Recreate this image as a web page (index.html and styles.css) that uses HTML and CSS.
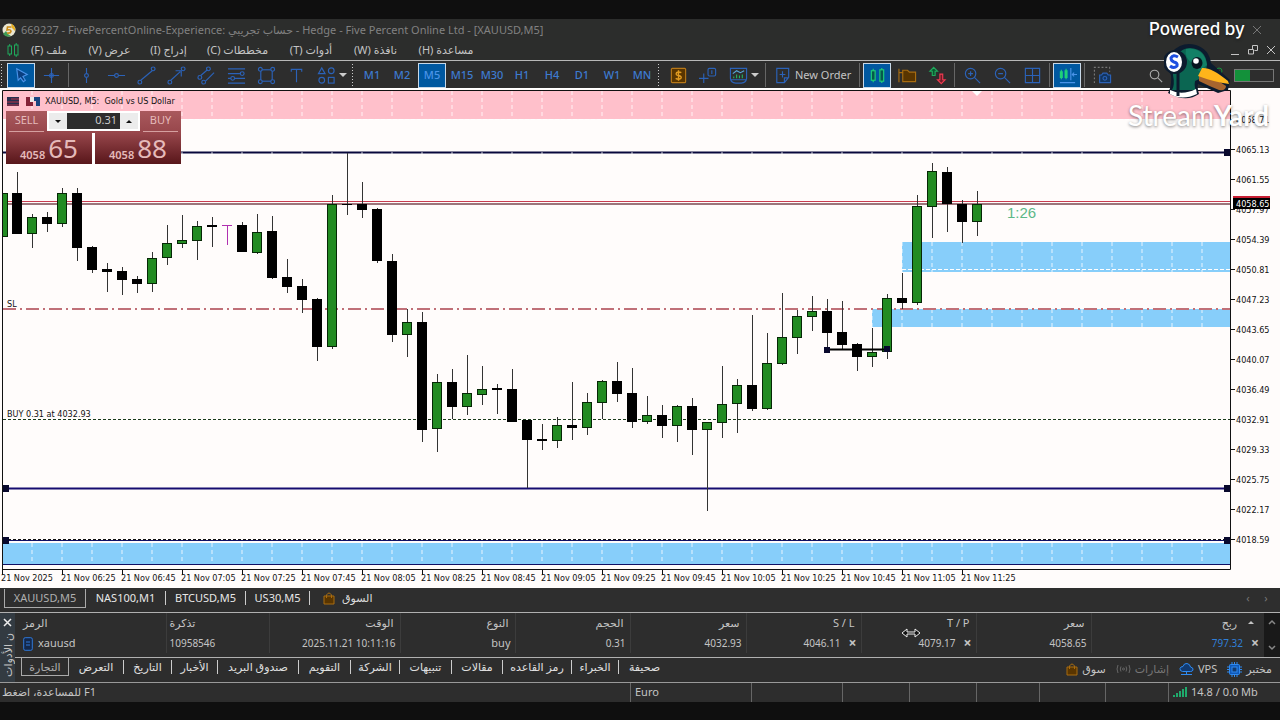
FILE: index.html
```html
<!DOCTYPE html>
<html lang="ar">
<head>
<meta charset="utf-8">
<title>XAUUSD,M5</title>
<link rel="stylesheet" href="styles.css">
</head>
<body>
<div class="app">
  <header class="titlebar">
    <svg class="logo" width="14" height="16" viewBox="0 0 14 16"><circle cx="7" cy="8" r="6.5" fill="#e9e6d2"/><path d="M1 12Q4 16 9 14Q5 12 4 9Z" fill="#3f9a55"/><path d="M9 1.500Q14 4 13 9L10 6Z" fill="#e8b020"/><path d="M9.500 5H5.500L5 8Q9 7 9 9.500Q8.500 11.500 5 11" fill="none" stroke="#c98a16" stroke-width="1.600"/></svg>
    <span class="title">669227 - FivePercentOnline-Experience: حساب تجريبي - Hedge - Five Percent Online Ltd - [XAUUSD,M5]</span>
    <button class="win-close" aria-label="Close"><svg width="10" height="10" viewBox="0 0 10 10"><path d="M1 1L9 9M9 1L1 9" stroke="#777" fill="none"/></svg></button>
  </header>

  <nav class="menubar">
    <svg class="menu-icon" width="12" height="14" viewBox="0 0 12 14" fill="none" stroke="#1faa5c"><rect x="1" y="3" width="3.500" height="8"/><path d="M2.700 1V3M2.700 11V13M9.200 0V2M9.200 12V14"/><rect x="7.500" y="2" width="3.500" height="10"/></svg>
    <button class="menu m1" dir="rtl">ملف (F)</button>
    <button class="menu m2" dir="rtl">عرض (V)</button>
    <button class="menu m3" dir="rtl">إدراج (I)</button>
    <button class="menu m4" dir="rtl">مخططات (C)</button>
    <button class="menu m5" dir="rtl">أدوات (T)</button>
    <button class="menu m6" dir="rtl">نافذة (W)</button>
    <button class="menu m7" dir="rtl">مساعدة (H)</button>
    <svg class="mdi" width="46" height="12" viewBox="0 0 46 12" fill="none" stroke="#c4c4c4"><path d="M1 10.500H9M37 2L45 10M45 2L37 10"/><path d="M22.500 5V1.500H27.500V6.500H24.500M18.500 5.500H23.500V10H18.500Z"/></svg>
  </nav>

  <div class="toolbar">
    <span class="grip"></span>
    <button class="tool on" aria-label="Cursor"><svg viewBox="0 0 20 20"><path d="M5 3L16 9L11.500 11L14 15L12 16.500L9 12.500L6.500 15Z" fill="#0a3f80" stroke="#4a93e8"/></svg></button>
    <button class="tool" aria-label="Crosshair"><svg viewBox="0 0 20 20"><path d="M10 2V18M2 10H18"/><circle cx="10" cy="10" r="2"/></svg></button>
    <span class="sep"></span>
    <button class="tool" aria-label="Vertical line"><svg viewBox="0 0 20 20"><path d="M10 2V8M10 12V18"/><circle cx="10" cy="10" r="2"/></svg></button>
    <button class="tool" aria-label="Horizontal line"><svg viewBox="0 0 20 20"><path d="M1 10H8M12 10H19"/><circle cx="10" cy="10" r="2"/></svg></button>
    <button class="tool" aria-label="Trend line"><svg viewBox="0 0 20 20"><path d="M4 15L16 5"/><circle cx="3" cy="17" r="2"/><circle cx="17" cy="3" r="2"/></svg></button>
    <button class="tool" aria-label="Arrow line"><svg viewBox="0 0 20 20"><path d="M4 15L14 6M9 5H15V11"/><circle cx="3" cy="17" r="2"/><circle cx="17" cy="3" r="2"/></svg></button>
    <button class="tool" aria-label="Channel"><svg viewBox="0 0 20 20"><path d="M4 10L11 4M9 16L18 7"/><circle cx="3" cy="12" r="2"/><circle cx="12" cy="3" r="2"/><circle cx="7" cy="17" r="2"/></svg></button>
    <button class="tool" aria-label="Fibonacci"><svg viewBox="0 0 20 20"><path d="M1 3H19M1 8H14M1 13H4M8 13H19M1 18H19"/><circle cx="16" cy="8" r="2"/><circle cx="6" cy="13" r="2"/></svg></button>
    <button class="tool" aria-label="Rectangle"><svg viewBox="0 0 20 20"><rect x="4" y="4" width="12" height="12"/><g fill="#2d2d2d"><circle cx="3.500" cy="3.500" r="2"/><circle cx="16.500" cy="3.500" r="2"/><circle cx="3.500" cy="16.500" r="2"/><circle cx="16.500" cy="16.500" r="2"/></g></svg></button>
    <button class="tool" aria-label="Text"><svg viewBox="0 0 20 20"><path d="M4.500 6V3.500H15.500V6M10 3.500V17"/></svg></button>
    <button class="tool" aria-label="Shapes"><svg viewBox="0 0 20 20"><path d="M5 2L8.500 8H1.500Z"/><circle cx="15" cy="5" r="3"/><circle cx="5" cy="15" r="3"/><rect x="12" y="12" width="6" height="6"/></svg></button>
    <span class="caret"></span>
    <span class="grip g2"></span>
    <button class="tool tf">M1</button><button class="tool tf">M2</button><button class="tool tf on">M5</button><button class="tool tf">M15</button><button class="tool tf">M30</button><button class="tool tf">H1</button><button class="tool tf">H4</button><button class="tool tf">D1</button><button class="tool tf">W1</button><button class="tool tf">MN</button>
    <span class="grip"></span>
    <button class="tool" aria-label="Trading"><svg viewBox="0 0 20 20"><rect x="2.500" y="2.500" width="15" height="15" rx="1" fill="#593500" stroke="#b87818"/><path d="M13 7Q10 5.500 8 7Q6.500 9.500 10 10Q14 11 12.500 13Q10 15 7 13M10 4.500V15.500" stroke="#e09a20" stroke-width="1.500"/></svg></button>
    <button class="tool" aria-label="Data window"><svg viewBox="0 0 20 20"><path d="M5 8V18M0 13H10"/><rect x="9.500" y="2.500" width="8" height="8" rx="1.500"/><path d="M13.500 4.500V8.500"/></svg></button>
    <button class="tool" aria-label="Indicators"><svg viewBox="0 0 20 20"><path d="M1.500 2.500H18.500V13Q18 17.500 13 18H7Q2 17.500 1.500 13ZM2 14.500H18"/><path d="M4 8L8 5L12 7L16 5" stroke="#58a6d8"/><path d="M5 11V13M8 9V13M11 10V13M14 9V13" stroke="#24b060"/></svg></button>
    <span class="caret"></span>
    <span class="sep s2"></span>
    <button class="order"><svg viewBox="0 0 20 20"><path d="M4 2.500H16.500V12L12 17.500H4ZM12 17V12.500H16.500M10 5.500V12M7 9H13"/></svg>New Order</button>
    <span class="sep"></span>
    <button class="tool on" aria-label="Candles"><svg viewBox="0 0 20 20"><g stroke="#1ed078" fill="#06594d"><path d="M5.500 3V17M14.500 2V18"/><rect x="3.500" y="5" width="4" height="10"/><rect x="12.500" y="4" width="4" height="12"/></g></svg></button>
    <button class="tool" aria-label="Templates"><svg viewBox="0 0 20 20"><g stroke="#a86c10" fill="#593500"><path d="M1 3V17M1 7H5M5 4.500H10L12 6.500H18.500V16.500H5Z"/></g></svg></button>
    <button class="tool" aria-label="Buy and sell"><svg viewBox="0 0 20 20"><path d="M6 1.500L10 5.500H7.500V10H4.500V5.500H2Z" stroke="#1faa5c" fill="#0c5530"/><path d="M14 18.500L18 14.500H15.500V8.500H12.500V14.500H10Z" stroke="#f03a50" fill="#701c28"/></svg></button>
    <span class="sep"></span>
    <button class="tool" aria-label="Zoom in"><svg viewBox="0 0 20 20"><circle cx="8" cy="8" r="5.500"/><path d="M12 12L18 18M8 5.500V10.500M5.500 8H10.500"/></svg></button>
    <button class="tool" aria-label="Zoom out"><svg viewBox="0 0 20 20"><circle cx="8" cy="8" r="5.500"/><path d="M12 12L18 18M5.500 8H10.500"/></svg></button>
    <button class="tool" aria-label="Tile"><svg viewBox="0 0 20 20"><path d="M2.500 2.500H17.500V17.500H2.500ZM10 2.500V17.500M2.500 10H17.500"/></svg></button>
    <span class="sep"></span>
    <button class="tool on" aria-label="Chart shift"><svg viewBox="0 0 20 20"><path d="M2 17.500H18M13.500 2V15" stroke="#4a93e8"/><path d="M15 9H20M17 7L15 9L17 11" stroke="#4a93e8"/><path d="M3.500 4V14M8.500 3V14M2.500 6H4.500V12H2.500ZM7.500 5H9.500V12H7.500Z" stroke="#1ed078"/></svg></button>
    <span class="sep"></span>
    <button class="tool" aria-label="Screenshot"><svg viewBox="0 0 20 20"><path d="M1.500 18V1.500H17.500V6" stroke-dasharray="2 2" stroke="#777"/><path d="M7 9.500H9L10.500 7.500H14.500L16 9.500H18.500V17.500H7Z" fill="#123560"/><circle cx="12.500" cy="13" r="2"/></svg></button>
    <span class="grow"></span>
    <button class="tool find" aria-label="Search"><svg viewBox="0 0 20 20"><circle cx="9" cy="9" r="4.500" stroke="#aaa"/><path d="M12.500 12.500L17 17" stroke="#aaa"/></svg></button>
    <svg class="bulb" width="8" height="12" viewBox="0 0 8 12" fill="none" stroke="#13913a"><circle cx="4" cy="4" r="3"/><path d="M4 3V10"/></svg>
    <span class="level" role="img" aria-label="Level"><i></i></span>
  </div>

  <main class="chart">
    <svg class="plot" viewBox="0 89 1280 499" role="img" aria-label="XAUUSD M5">
      <rect x="3" y="91" width="1227" height="28" fill="#ffc0cb"/>
      <rect x="902" y="242" width="328" height="30" fill="#87cefa"/>
      <rect x="872" y="309" width="358" height="18" fill="#87cefa"/>
      <rect x="3" y="543" width="1227" height="21" fill="#87cefa"/>
      <path d="M3 152.500H1230" stroke="#08083c" stroke-width="2"/>
      <g id="grid" stroke="#fff" stroke-opacity="0.800" stroke-dasharray="4 3" fill="none"></g>
      <path d="M3 119.500H1230M902 269.500H1230" stroke="#fff" stroke-dasharray="4 2"/>
      <path d="M3 488.500H1230" stroke="#160c70" stroke-width="2"/>
      <path d="M3 540.500H1230M3 564.500H1230" stroke="#101064"/>
      <path d="M3 539.500H1230" stroke="#111" stroke-dasharray="3 2"/>
      <path d="M3 201.500H1230" stroke="#c83c50" shape-rendering="crispEdges"/>
      <path d="M3 204H1230" stroke="#7d4850" stroke-width="1.500"/>
      <path d="M3 309H1230" stroke="#c07078" stroke-dasharray="13 4 2 4" stroke-width="2"/>
      <path d="M3 419.500H1230" stroke="#1a3a1a" stroke-dasharray="3 2"/>
      <g id="candles" shape-rendering="crispEdges"></g>
      <path d="M827 349.500H887" stroke="#000" stroke-width="2"/>
      <path d="M824 347h6v6h-6zM884 346h6v6h-6zM1224 149h6v7h-6zM3 485h6v7h-6zM1224 485h6v7h-6zM3 537h6v7h-6zM1224 537h6v7h-6z" fill="#08082c"/>
      <path d="M972 91H982L977 96Z" fill="#fff"/>
      <path d="M2.500 570V90.500H1230.500V569.500H2.500" fill="none" stroke="#111"/>
      <g id="ticks" stroke="#111"></g>
      <g id="labels" class="axis"></g>
      <rect x="1233" y="196" width="37" height="8" fill="#c81e32"/>
      <rect x="1233" y="198" width="37" height="11" fill="#000"/>
      <text class="axis inv" x="1236" y="207">4058.65</text>
      <text class="axis" x="7" y="307">SL</text>
      <text class="axis" x="7" y="417">BUY 0.31 at 4032.93</text>
      <text class="timer" x="1007" y="218">1:26</text>
    </svg>

    <section class="trade">
      <h1><svg width="12" height="9" viewBox="0 0 12 9"><path d="M0 0H12V9H0Z" fill="#26304f"/><path d="M4 2H12M0 5H12M0 8H12" stroke="#b83248"/></svg><svg width="14" height="9" viewBox="0 0 14 9"><path d="M0 0H4V5H7V9H0Z" fill="#832238"/><path d="M8 0H14V9H10V4H8Z" fill="#1c4580"/><path d="M4 0H8V5H4Z" fill="#efe9e9"/></svg><span>XAUUSD, M5:&nbsp; Gold vs US Dollar</span></h1>
      <div class="deal">
        <button class="side">SELL</button>
        <div class="spin"><button aria-label="Less"><i class="dn"></i></button><input value="0.31" aria-label="Volume"><button aria-label="More"><i class="up"></i></button></div>
        <button class="side">BUY</button>
      </div>
      <div class="quotes"><button><b>4058</b><span>65</span></button><button><b>4058</b><span>88</span></button></div>
    </section>
  </main>

  <nav class="charts">
    <button class="ctab on">XAUUSD,M5</button><button class="ctab c80">NAS100,M1</button><button class="ctab c80">BTCUSD,M5</button><button class="ctab c64">US30,M5</button>
    <button class="market"><svg width="12" height="13" viewBox="0 0 12 13"><path d="M1 4H11V12H1Z" fill="#593500" stroke="#a86c10"/><path d="M3.500 6V3Q6-1 8.500 3V6" fill="none" stroke="#a86c10"/></svg>السوق</button>
    <span class="grow"></span>
    <span class="pager">‹</span><span class="pager">›</span>
  </nav>

  <section class="toolbox">
    <aside><button aria-label="Close toolbox"><svg width="9" height="9" viewBox="0 0 9 9"><path d="M1 1L8 8M8 1L1 8" stroke="#eee" stroke-width="1.500"/></svg></button><span dir="rtl">ن الأدوات</span></aside>
    <div class="panel">
      <div class="list">
      <table>
        <colgroup><col class="w145"><col class="w103"><col class="w131"><col class="w115"><col class="w115"><col class="w116"><col class="w115"><col class="w115"><col class="w115"><col></colgroup>
        <thead><tr><th class="l">الرمز</th><th class="l">تذكرة</th><th>الوقت</th><th>النوع</th><th>الحجم</th><th>سعر</th><th>S / L</th><th>T / P</th><th>سعر</th><th class="last">ربح <i class="up"></i></th></tr></thead>
        <tbody><tr><td class="l"><svg width="10" height="14" viewBox="0 0 10 14"><rect x="0.700" y="0.700" width="8.600" height="12.600" rx="1.500" fill="#14284a" stroke="#2f78d8"/><path d="M3 5H7M3 8H7" stroke="#2f78d8"/></svg><span class="sym">xauusd</span></td><td class="l">10958546</td><td>2025.11.21 10:11:16</td><td class="word">buy</td><td>0.31</td><td>4032.93</td><td>4046.11<button>×</button></td><td>4079.17<button>×</button></td><td>4058.65</td><td class="last"><span class="profit">797.32</span><button>×</button></td></tr></tbody>
      </table>
      <div class="scroll"><svg width="8" height="6" viewBox="0 0 8 6"><path d="M1 5L4 2L7 5" fill="none" stroke="#888" stroke-width="1.500"/></svg><svg width="8" height="6" viewBox="0 0 8 6"><path d="M1 1L4 4L7 1" fill="none" stroke="#888" stroke-width="1.500"/></svg></div>
      </div>
      <nav class="tabs">
        <button class="btab on">التجارة</button><button class="btab b55">التعرض</button><button class="btab b48">التاريخ</button><button class="btab b46">الأخبار</button><button class="btab b81">صندوق البريد</button><button class="btab b52">التقويم</button><button class="btab b49">الشركة</button><button class="btab b52">تنبيهات</button><button class="btab b51">مقالات</button><button class="btab b69">رمز القاعده</button><button class="btab b47">الخبراء</button><button class="btab b51">صحيفة</button>
        <span class="grow"></span>
        <button class="svc"><svg width="12" height="13" viewBox="0 0 12 13"><path d="M1 4H11V12H1Z" fill="#593500" stroke="#a86c10"/><path d="M3.500 6V3Q6-1 8.500 3V6" fill="none" stroke="#a86c10"/></svg>سوق</button>
        <button class="svc dim"><svg width="15" height="10" viewBox="0 0 15 10" fill="none" stroke="#666"><circle cx="7.500" cy="5" r="1"/><path d="M5 2.500Q3.500 5 5 7.500M10 2.500Q11.500 5 10 7.500M2 1Q0 5 2 9M13 1Q15 5 13 9"/></svg>إشارات</button>
        <button class="svc"><svg width="15" height="14" viewBox="0 0 15 14" fill="#123a70" stroke="#2f8af0"><path d="M3.500 9.500Q0.500 9 1 6.500Q1.500 4.500 4 4.500Q5 1 8 1.500Q11 2 11.500 5Q14.500 5.500 14 8Q13.500 9.500 11.500 9.500Z"/><path d="M7.500 10V12.500M2 12.500H13"/></svg>VPS</button>
        <button class="svc"><svg width="15" height="15" viewBox="0 0 15 15" fill="#0f58b8" stroke="#2f8af0"><path d="M5 0V15M7.500 0V15M10 0V15M0 5H15M0 7.500H15M0 10H15"/><rect x="2.500" y="2.500" width="10" height="10" rx="1"/><rect x="5" y="5" width="5" height="5" fill="#123a70"/></svg>مختبر</button>
      </nav>
    </div>
  </section>

  <footer class="status">
    <span class="hint">للمساعدة، اضغط F1</span><span class="w121">Euro</span><span class="w91"></span><span class="w67"></span><span class="w67"></span><span class="w63"></span><span class="w66"></span><span class="w63"></span>
    <span class="net"><svg width="14" height="10" viewBox="0 0 14 10"><path d="M1 10V8M4 10V6M7 10V4M10 10V2M13 10V0" stroke="#1faa6c" stroke-width="2"/></svg>14.8 / 0.0 Mb</span>
  </footer>

  <svg class="pointer" width="20" height="10" viewBox="0 0 20 10"><path d="M1 5L6 1V4H14V1L19 5L14 9V6H6V9Z" fill="#111" stroke="#eee"/></svg>

  <div class="mark">
    <p class="by">Powered by</p>
    <svg width="66" height="58" viewBox="0 0 66 58">
      <path d="M4 50Q8 43 7 32Q-1 20 8 9Q18-2 32 2Q45 6 47 20L66 37L64 47L54 50L34 41Q33 45 35 51Q22 60 4 50Z" fill="#0c1b2e"/>
      <path d="M9 32Q10 5 26 5Q42 6 43 22Q42 34 31 38Q30 44 32 47L8 47Q11 42 9 32Z" fill="#0b6652"/>
      <path d="M22 6Q40 4 43 22L35 28L28 20Q20 14 22 6Z" fill="#128066"/>
      <path d="M6 47Q18 53 32 46L33 51Q18 58 6 51Z" fill="#fff"/>
      <path d="M35 33Q48 33 62 43Q62 48 55 47Q45 43 35 38Z" fill="#a8652e"/>
      <path d="M38 25Q47 24 64 38L65 41Q50 39 34 33Z" fill="#ffb51b"/>
      <ellipse cx="33" cy="20" rx="5.500" ry="6" fill="#07141f"/><circle cx="32" cy="18" r="2.800" fill="#fff"/>
      <path d="M14 28V53" stroke="#0c1b2e" stroke-width="3"/>
      <circle cx="11" cy="19" r="12" fill="#0c1b2e"/><ellipse cx="10" cy="19" rx="8" ry="10" fill="#fff"/>
      <path d="M14 14Q9 11 7 15Q7 18 10 19Q14 20 13 23Q10 26 6 23" fill="none" stroke="#1d4fe0" stroke-width="3"/>
    </svg>
    <p class="brand">Stream<b>Yard</b></p>
  </div>
</div>
<script src="chart.js"></script>
</body>
</html>
```
FILE: styles.css
```css
* { box-sizing: border-box; }
body { margin: 0; background: #0f0f0f; color: #c4c4c4; font: 11px/16px "Noto Sans", "DejaVu Sans", sans-serif; }
button { border: 0; padding: 0; margin: 0; background: none; color: inherit; font: inherit; white-space: nowrap; }
svg { flex: none; }
.app { position: relative; display: flex; flex-direction: column; min-height: 100vh; padding: 19px 0; }
.grow { flex: 1; }

.titlebar { display: flex; align-items: center; gap: 5px; height: 22px; padding: 0 18px 0 2px; background: #2c2d2c; color: #818181; }
.title { flex: 1; white-space: nowrap; overflow: hidden; }
.win-close { display: flex; }
.menubar { display: flex; align-items: center; height: 19px; padding: 0 4px 2px 7px; background: #2c2d2c; }
.menu-icon { margin-right: 1px; }
.menu { text-align: center; }
.m1 { width: 58px; } .m2 { width: 63px; } .m3 { width: 55px; } .m4 { width: 83px; } .m5 { width: 64px; } .m6 { width: 65px; } .m7 { width: 76px; }
.mdi { margin-left: auto; }

.toolbar { display: flex; align-items: center; height: 29px; padding: 1px 6px 0 0; background: #2d2d2d; border-top: 1px solid #b8b8b8; border-bottom: 1px solid #fff; color: #3d7bd0; }
.grip { width: 6px; height: 25px; background: radial-gradient(circle, #ccc 1px, transparent 1px) 0 0 / 3px 3px repeat-y; }
.g2 { margin-left: 4px; }
.tool { display: flex; align-items: center; justify-content: center; flex: none; width: 28px; height: 25px; margin: 0 1px; }
.tool svg, .order svg { width: 19px; height: 19px; fill: none; stroke: #2b62b8; stroke-width: 1.2; }
.on.tool { background: #0058a0; border: 1px solid #c8d8e8; }
.tf { font-size: 11px; font-weight: 500; }
.tf.on { color: #4a93e8; }
.sep { width: 1px; height: 24px; margin: 0 2px; background: #666; }
.s2 { margin-left: 6px; }
.caret { width: 8px; margin-left: -2px; border: solid transparent; border-width: 4px 4px 0; border-top-color: #ccc; }
.order { display: flex; align-items: center; gap: 3px; margin: 0 6px 0 5px; color: #c4c4c4; }
.find { margin-right: 46px; }
.bulb { margin: 0 11px 4px 0; }
.level { width: 40px; height: 13px; border: 1px solid #777; }
.level i { display: block; width: 40%; height: 11px; background: #13913a; }

.chart { position: relative; background: #fffcfb; }
.plot { display: block; width: 100%; height: auto; }
.axis { font: 9px "DejaVu Sans Condensed", "DejaVu Sans", sans-serif; fill: #111; }
.inv { fill: #fff; }
.timer { font: 15px "Liberation Sans", sans-serif; fill: #5cb888; }
.up, .dn { display: inline-block; border: solid transparent; border-width: 0 3px 3px; border-bottom-color: currentColor; }
.dn { border-width: 3px 3px 0; border-top-color: currentColor; }

.trade { position: absolute; left: 6px; top: 4px; width: 175px; color: #e5baba; }
.trade h1 { display: flex; align-items: center; gap: 7px; height: 16px; margin: 0; padding-left: 1px; color: #111; font: 9px "DejaVu Sans Condensed", "DejaVu Sans", sans-serif; white-space: nowrap; }
.trade h1 span { margin-left: -2px; }
.deal { display: flex; height: 22px; margin-top: 2px; background: linear-gradient(#a9595d, #97464b); }
.side { flex: 1; height: 21px; margin: 0 3px; padding-bottom: 3px; border-bottom: 1px solid #d5a0a0; }
.spin { display: flex; width: 93px; height: 20px; border: 2px solid #fff; background: #fff; color: #111; }
.spin button { display: flex; align-items: center; justify-content: center; width: 18px; background: #ececec; }
.spin input { flex: 1; min-width: 0; border: 0; padding: 0 3px 2px; background: #2d2d2d; color: #ccc; font: inherit; text-align: right; }
.quotes { display: flex; gap: 3px; height: 31px; background: #fff; }
.quotes button { flex: 1; display: flex; align-items: flex-end; justify-content: center; gap: 3px; padding-bottom: 1px; background: linear-gradient(#97464b, #58161a); }
.quotes b { font-weight: 600; line-height: 17px; }
.quotes span { font-size: 26px; line-height: 30px; }

.charts { display: flex; align-items: center; height: 24px; padding: 0 5px 4px 4px; background: #2e2e2e; }
.ctab { width: 82px; height: 19px; font-size: 11px; line-height: 17px; color: #e8e8e8; }
.ctab.on { border: 1px solid #aaa; border-top: 0; color: #b0b0b0; }
.c80 { width: 80px; border-right: 1px solid #ccc; }
.c64 { width: 64px; border-right: 1px solid #ccc; }
.ctab.c80, .ctab.c64 { height: 14px; line-height: 14px; }
.market { display: flex; align-items: center; gap: 7px; margin-left: 13px; color: #ddd; }
.pager { width: 18px; text-align: center; color: #777; }

.toolbox { display: flex; border-top: 1px solid #b0b0b0; background: #2d2d2d; }
.toolbox aside { display: flex; flex-direction: column; align-items: center; width: 15px; height: 69px; padding-top: 5px; background: #333b42; }
.toolbox aside button { display: flex; margin-bottom: 6px; }
.toolbox aside span { writing-mode: vertical-rl; transform: rotate(180deg); line-height: 14px; white-space: nowrap; }
.panel { flex: 1; min-width: 0; }
.list { display: flex; height: 44px; margin-left: 5px; }
table { flex: 1; table-layout: fixed; width: 0; height: 40px; border-collapse: collapse; }
th, td { height: 20px; padding: 0 4px; border-right: 1px solid #3c3c3c; font-size: 10px; font-weight: 400; line-height: 16px; text-align: right; white-space: nowrap; }
th { padding-right: 6px; font-size: 11px; }
td button { width: 8px; margin-left: 8px; font-size: 14px; font-weight: 700; line-height: 12px; vertical-align: -1px; }
.l { text-align: left; padding-left: 3px; }
td.l svg { vertical-align: middle; }
.sym { margin-left: 5px; font-size: 11px; }
.word { font-size: 11px; }
.last { border: 0; padding-right: 5px; }
th.last { padding-right: 10px; }
th.last i { margin-left: 8px; vertical-align: 3px; }
.profit { color: #2f7fd8; }
.w145 { width: 146px; } .w103 { width: 103px; } .w131 { width: 131px; } .w116 { width: 116px; } .w115 { width: 115px; }
.scroll { display: flex; flex-direction: column; align-items: center; justify-content: space-between; width: 16px; padding: 6px 0; background: #191919; }
.tabs { display: flex; align-items: flex-start; height: 25px; padding-right: 8px; border-top: 1px solid #b0b0b0; }
.btab { height: 14px; margin-top: 2px; line-height: 12px; border-right: 1px solid #ccc; color: #e0e0e0; }
.btab.on { width: 48px; height: 18px; margin: 0 0 0 6px; border: 1px solid #aaa; border-top: 0; color: #b0b0b0; line-height: 14px; }
.b55 { width: 55px; } .b48 { width: 48px; } .b46 { width: 46px; } .b81 { width: 81px; } .b52 { width: 52px; } .b49 { width: 49px; } .b51 { width: 51px; } .b69 { width: 69px; } .b47 { width: 47px; }
.btab:nth-of-type(12) { border: 0; }
.svc { display: flex; align-items: center; gap: 4px; height: 22px; margin-left: 10px; }
.dim { color: #777; }

.status { display: flex; height: 20px; border-top: 1px solid #999; background: #2d2d2d; line-height: 17px; }
.status span { border-right: 1px solid #666; }
.status .hint { flex: 1; padding-left: 2px; white-space: nowrap; }
.status .w121 { width: 121px; padding-left: 4px; }
.w91 { width: 91px; } .w67 { width: 67px; } .w63 { width: 63px; } .w66 { width: 66px; }
.status .net { display: flex; align-items: center; gap: 4px; width: 111px; padding: 0 0 2px 4px; border: 0; }

.pointer { position: absolute; left: 901px; top: 628px; }
.mark { position: absolute; top: 18px; right: 12px; width: 140px; color: #fff; text-shadow: 0 1px 3px rgba(0, 0, 0, 0.5); pointer-events: none; }
.mark p { margin: 0; }
.mark svg { display: block; margin: 3px 0 0 36px; }
.mark .by { padding-left: 21px; font: 500 17px/22px Inter, sans-serif; }
.mark .brand { font: 400 28px/28px Lato, sans-serif; }
.mark .brand b { font-weight: 700; }
```
FILE: chart.js
```js
// x, high, low, body top, body bottom, colour (g = rising, b = falling, m = flat)
const bars = [
[17,172,234,193,234,'b'],[32,214,248,217,234,'g'],[47,212,232,217,224,'b'],[62,188,227,193,224,'g'],[77,188,261,193,248,'b'],
[92,246,273,247,270,'b'],[107,263,292,269,272,'b'],[122,267,295,271,280,'b'],[137,276,293,279,284,'b'],[152,252,292,258,284,'g'],
[167,225,265,243,258,'g'],[182,215,248,240,244,'g'],[197,221,260,226,241,'g'],[212,217,247,225,227,'b'],[227,225,245,225,226,'m'],
[242,222,252,225,252,'b'],[257,214,254,232,253,'g'],[272,216,279,231,278,'b'],[287,259,293,277,287,'b'],[302,279,313,286,300,'b'],
[317,298,361,299,347,'b'],[332,195,349,204,347,'g'],[347,153,215,204,205,'b'],[362,182,218,204,210,'b'],[377,208,263,209,261,'b'],
[392,254,342,261,335,'b'],[407,309,357,322,335,'g'],[422,312,442,322,430,'b'],[437,374,452,382,429,'g'],[452,369,419,382,407,'b'],
[467,355,415,393,407,'g'],[482,366,405,389,395,'g'],[497,384,414,388,390,'b'],[512,369,422,389,422,'b'],[527,420,488,420,440,'b'],
[542,424,450,439,441,'b'],[557,417,448,425,441,'g'],[572,382,440,425,428,'b'],[587,393,435,402,428,'g'],[602,380,419,381,403,'g'],
[617,362,402,381,394,'b'],[632,368,428,393,422,'b'],[647,396,424,415,422,'g'],[662,405,438,415,426,'b'],[677,405,442,406,426,'g'],
[692,398,455,406,430,'b'],[707,422,511,422,430,'g'],[722,366,438,404,423,'g'],[737,379,433,385,404,'g'],[752,315,411,385,409,'b'],
[767,333,410,363,409,'g'],[782,293,365,337,364,'g'],[797,310,354,316,338,'g'],[812,296,331,311,317,'g'],[827,299,350,311,333,'b'],
[842,301,350,332,345,'b'],[857,343,371,344,357,'b'],[872,328,367,352,357,'g'],[887,294,359,298,352,'g'],[902,273,309,298,303,'b'],
[917,195,305,206,303,'g'],[932,163,238,171,207,'g'],[947,167,232,172,204,'b'],[962,200,243,204,222,'b'],[977,191,236,204,222,'g']
];
const edge = { g: '#062806', b: '#000', m: '#b030b0' };
let out = '<rect x="2" y="193" width="6" height="44" fill="#062806"/><rect x="2" y="194" width="5" height="42" fill="#228b22"/>';
for (const [x, hi, lo, top, bottom, c] of bars) {
  const h = bottom - top;
  out += `<rect x="${x}" y="${hi}" width="1" height="${lo - hi}" fill="${c === 'm' ? edge.m : '#333'}"/>`;
  out += `<rect x="${x - 5}" y="${top}" width="10" height="${h}" fill="${edge[c]}"/>`;
  if (c === 'g') out += `<rect x="${x - 4}" y="${top + 1}" width="8" height="${h - 2}" fill="#228b22"/>`;
}
document.getElementById('candles').innerHTML = out;

let grid = '';
for (let x = 32; x < 1230; x += 30) {
  let d = `M${x} 91V119M${x} 152V154M${x} 543V566`;
  if (x >= 902) d += `M${x} 242V272`;
  if (x >= 872) d += `M${x} 309V327`;
  grid += `<path d="${d}"/>`;
}
document.getElementById('grid').innerHTML = grid;

let ticks = '', labels = '';
for (let i = 0; i < 17; i++) {
  const x = 2 + i * 60;
  const m = 365 + i * 20;
  const hh = String(Math.floor(m / 60)).padStart(2, '0');
  const mm = String(m % 60).padStart(2, '0');
  ticks += `<path d="M${x}.5 570V575"/>`;
  labels += `<text x="${x - 1}" y="581">21 Nov ${i ? hh + ':' + mm : '2025'}</text>`;
}
for (let i = 0; i < 15; i++) {
  const y = 119 + i * 30;
  ticks += `<path d="M1231 ${y}.5H1235"/>`;
  labels += `<text x="1236" y="${y + 4}">${(4068.71 - i * 3.58).toFixed(2)}</text>`;
}
document.getElementById('ticks').innerHTML = ticks;
document.getElementById('labels').innerHTML = labels;
```
